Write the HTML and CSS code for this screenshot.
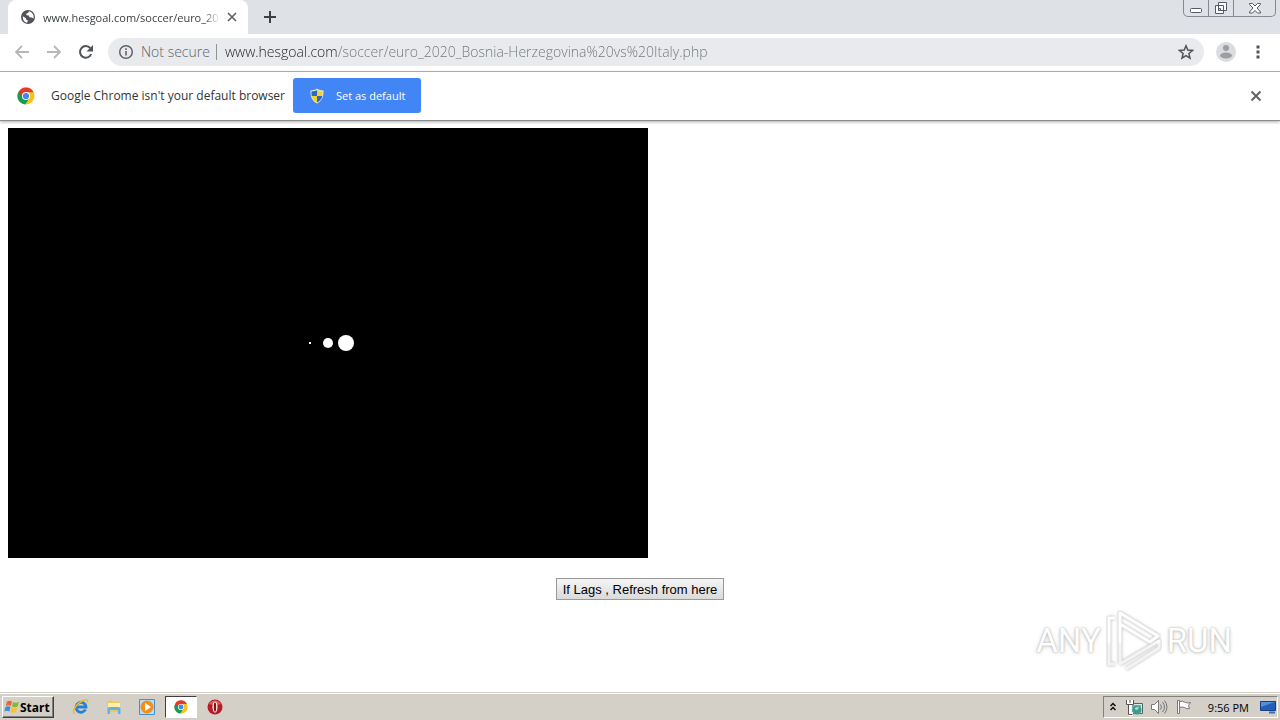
FILE: index.html
```html
<!DOCTYPE html>
<html lang="en">
<head>
<meta charset="utf-8">
<title>www.hesgoal.com/soccer/euro_2020</title>
<link rel="stylesheet" href="styles.css">
</head>
<body>
<header class="tabstrip">
  <div class="tab">
    <svg class="globe" viewBox="0 0 16 16" width="16" height="16"><circle cx="8" cy="8" r="7" fill="#505357"/><path d="M2.8 7.2 6 9.2v1.4l1.8.6-.6 2.6C4.300 13.300 2.600 11 2.800 7.200zM9 2.300l-.8 1.500-2 .9.300 1.500 2.300.2.700 1.800 2.200.2 1.800 1.100c.8-3-1-6.300-4.500-7.200z" fill="#fff"/></svg>
    <span class="tab-title">www.hesgoal.com/soccer/euro_202</span>
    <button class="icon-btn" aria-label="Close tab"><svg viewBox="0 0 12 12" width="12" height="12"><path d="M2 2l8 8M10 2l-8 8" stroke="#5f6368" stroke-width="1.700"/></svg></button>
  </div>
  <button class="icon-btn new-tab" aria-label="New tab"><svg viewBox="0 0 14 14" width="14" height="14"><path d="M7 1v12M1 7h12" stroke="#3c4043" stroke-width="2"/></svg></button>
  <div class="window-controls">
    <button class="win" aria-label="Minimize"><svg viewBox="0 0 14 14" width="14" height="14"><rect x="1.500" y="7.500" width="11" height="4" rx="1" fill="#fff" stroke="#555a66"/></svg></button>
    <button class="win" aria-label="Restore"><svg viewBox="0 0 14 14" width="14" height="14"><path d="M4.500 1.500h8v8h-8zM1.500 4.500h8v8h-8z" fill="#fff" stroke="#555a66"/><path d="M4.500 7.500h2v2h-2z" fill="#dee1e6" stroke="#555a66"/></svg></button>
    <button class="win win-close" aria-label="Close"><svg viewBox="0 0 14 14" width="14" height="14"><path d="M1.500 2.500h3L7 5l2.500-2.500h3v1L9 7l3.500 4v1h-3L7 9.500 4.500 12h-3v-1L5 7 1.500 3.500z" fill="#fff" stroke="#555a66"/></svg></button>
  </div>
</header>
<nav class="toolbar">
  <button class="icon-btn nav-btn" aria-label="Back"><svg viewBox="0 0 16 16" width="16" height="16"><path d="M15 8H2.500M8 2 2 8l6 6" fill="none" stroke="#b5b8bb" stroke-width="1.800"/></svg></button>
  <button class="icon-btn nav-btn" aria-label="Forward"><svg viewBox="0 0 16 16" width="16" height="16"><path d="M1 8h12.500M8 2l6 6-6 6" fill="none" stroke="#b5b8bb" stroke-width="1.800"/></svg></button>
  <button class="icon-btn nav-btn" aria-label="Reload"><svg viewBox="0 0 16 16" width="16" height="16"><path d="M13.200 10A5.800 5.800 0 1 1 12.300 4.200" fill="none" stroke="#505357" stroke-width="2"/><path d="M15 1v6.500H8.500z" fill="#505357"/></svg></button>
  <div class="omnibox">
    <button class="security"><svg viewBox="0 0 16 16" width="16" height="16"><circle cx="8" cy="8" r="6.300" fill="none" stroke="#5f6368" stroke-width="1.500"/><path d="M8 7v4.500M8 4.200v1.700" stroke="#5f6368" stroke-width="1.600"/></svg><span>Not secure</span></button>
    <input class="url" type="text" aria-label="Address" value="www.hesgoal.com/soccer/euro_2020_Bosnia-Herzegovina%20vs%20Italy.php">
    <button class="icon-btn" aria-label="Bookmark this page"><svg viewBox="0 0 16 16" width="16" height="16"><path d="m8 1.800 1.800 4.300 4.700.4-3.600 3 1.100 4.600L8 11.700l-4 2.400 1.100-4.600-3.600-3 4.700-.4z" fill="none" stroke="#505357" stroke-width="1.500"/></svg></button>
  </div>
  <button class="icon-btn profile" aria-label="Profile"><svg viewBox="0 0 20 20" width="20" height="20"><circle cx="10" cy="10" r="10" fill="#dadce0"/><circle cx="10" cy="6" r="3" fill="#9b9ea2"/><ellipse cx="10" cy="13.500" rx="6" ry="3" fill="#9b9ea2"/></svg></button>
  <button class="icon-btn menu" aria-label="Menu"><svg viewBox="0 0 4 14" width="4" height="14"><path d="M.5.500h3v3h-3zM.5 5.500h3v3h-3zM.5 10.500h3v3h-3z" fill="#505357"/></svg></button>
</nav>
<section class="infobar">
  <svg class="chrome" viewBox="0 0 18 18" width="18" height="18"><use href="#chrome-logo"/></svg>
  <span class="info-text">Google Chrome isn't your default browser</span>
  <button class="set-default"><svg viewBox="0 0 16 16" width="16" height="16"><path d="M8 .5C6 2 4 2.400 1.500 2.500 1.200 8.500 3 13 8 15.500 13 13 14.800 8.500 14.500 2.500 12 2.400 10 2 8 .5z" fill="#e8e6d2"/><path d="M8 2v6H2.700C2.400 6.500 2.400 5 2.500 3.500 4.500 3.400 6.500 3 8 2zM8 8h5.300C12.700 11 11 13 8 14.400z" fill="#2769c5"/><path d="M8 2v6h5.300c.3-1.500.3-3 .2-4.500C11.500 3.400 9.500 3 8 2zM8 8H2.700C3.300 11 5 13 8 14.400z" fill="#f8d22a"/></svg><span>Set as default</span></button>
  <button class="icon-btn info-close" aria-label="Dismiss"><svg viewBox="0 0 12 12" width="12" height="12"><path d="M1.500 1.500l9 9M10.500 1.500l-9 9" stroke="#5f6368" stroke-width="2"/></svg></button>
</section>
<main class="page">
  <div class="player"><span class="dot dot-small"></span><span class="dot dot-mid"></span><span class="dot dot-large"></span></div>
  <button class="refresh">If Lags , Refresh from here</button>
  <div class="watermark">
    <span>ANY</span>
    <svg viewBox="0 0 56 62" width="56" height="62"><defs><linearGradient id="mark-fill" gradientUnits="userSpaceOnUse" x1="0" y1="0" x2="0" y2="62"><stop offset=".5" stop-color="#fff"/><stop offset=".56" stop-color="#f3f3f3"/></linearGradient></defs><g fill="none" stroke-linejoin="round"><g class="mark-shade" stroke="#d2d2d2" stroke-width="5"><path d="M9 8H3v46h6M14 40V3l38 23-8 6-30-18M14 12v42M20 59l33-21v-7L14 54"/></g><g stroke="url(#mark-fill)" stroke-width="3"><path d="M9 8H3v46h6M14 40V3l38 23-8 6-30-18M14 12v42M20 59l33-21v-7L14 54"/></g></g></svg>
    <span>RUN</span>
  </div>
</main>
<footer class="taskbar">
  <button class="start"><svg viewBox="0 0 16 16" width="16" height="16"><path d="M3 2.500q2.500-1.500 5 0L6.800 7q-2.500-1.500-5 0z" fill="#f0642b"/><path d="M9 3q2.500 1.500 6 0l-1.300 4.500q-3 1.500-5.700 0z" fill="#80b93c"/><path d="M1.500 8q2.500-1.500 5 0l-1.200 4.500q-2.500-1.500-5 0z" fill="#3c8bdd"/><path d="M7.600 8.500q2.500 1.500 5.700 0L12 13q-3 1.500-5.700 0z" fill="#fac32c"/></svg><span>Start</span></button>
  <div class="launch">
    <button class="task" aria-label="Internet Explorer"><svg viewBox="0 0 18 18" width="18" height="18"><path d="M13.500 11.500A5 5 0 1 1 14 9H5" fill="none" stroke="#2683d0" stroke-width="2.800"/><path d="M2.500 15.500C-1 14 5 5 11 2.500c4-1.700 5.500-.8 4.500 2" fill="none" stroke="#f0b92c" stroke-width="1.500"/></svg></button>
    <button class="task" aria-label="Windows Explorer"><svg viewBox="0 0 18 18" width="18" height="18"><path d="M2 3.500 7 2l1 2h7v10H2z" fill="#eac95c"/><path d="M3 5h12v7H3z" fill="#fff0a5"/><path d="M2.500 16v-5q0-2 2-2h9q2 0 2 2v5H13v-4H5v4z" fill="#64b3df"/></svg></button>
    <button class="task" aria-label="Media Player"><svg viewBox="0 0 18 18" width="18" height="18"><path d="M1.500 1.500h15v15h-15z" fill="#b9dcf6" stroke="#4292d2"/><circle cx="9" cy="9" r="6.500" fill="#f28e1c"/><path d="M7 5v8l6-4z" fill="#fff"/></svg></button>
    <button class="task active" aria-label="Google Chrome"><svg viewBox="0 0 18 18" width="14" height="14"><g id="chrome-logo"><circle cx="9" cy="9" r="8.500" fill="#fbc116"/><path d="M9 9 1.600 4.700A8.500 8.500 0 0 0 8.200 17.500L12.500 11z" fill="#169b55"/><path d="M1.600 4.700A8.500 8.500 0 0 1 16.600 5.200H9L5.600 11z" fill="#e23a2e"/><circle cx="9" cy="9" r="4" fill="#fff"/><circle cx="9" cy="9" r="3.100" fill="#4285f4"/></g></svg></button>
    <button class="task" aria-label="Opera"><svg viewBox="0 0 18 18" width="18" height="18"><circle cx="9" cy="9" r="7.500" fill="#b71c24"/><path d="M3 6a7 7 0 0 1 12 0Q9 8 3 6z" fill="#db5a5e"/><ellipse cx="9" cy="9" rx="2.500" ry="5.500" fill="#fff"/><ellipse cx="9" cy="9" rx="1.200" ry="4.800" fill="#8b1118"/></svg></button>
  </div>
  <div class="tray">
    <button class="icon-btn chevrons" aria-label="Show hidden icons"><svg viewBox="0 0 8 10" width="8" height="10"><path d="M1.500 4l2.500-2.500L6.500 4M1.500 8l2.500-2.500L6.500 8" fill="none" stroke="#111" stroke-width="1.500"/></svg></button>
    <svg viewBox="0 0 17 17" width="17" height="17"><path d="M4.500 4.500h12v10h-12z" fill="#d5ecdf" stroke="#4c6b67"/><path d="M6 6h9v7H6z" fill="#79aeb0"/><circle cx="11" cy="11" r="4.500" fill="#3e9a8e"/><path d="M8.500 9.500q2-2.500 4.500-1.500l-1 2.500-2 .5z" fill="#a5dfc0"/><path d="M2 1v3h4V1M4 4v11.500h3" fill="none" stroke="#fff" stroke-width="3"/><path d="M.5 1v4.500h7V1M4 1v3M2.500 5.500v10h4" fill="none" stroke="#555"/></svg>
    <svg viewBox="0 0 18 16" width="18" height="16"><path d="M1.500 5.500h3l4-4v13l-4-4h-3z" fill="#fff" stroke="#777"/><path d="M10.500 5.500q2 2.500 0 5M12.500 3q4 5 0 10M14.500 1.500q5 6.500 0 13" fill="none" stroke="#777"/></svg>
    <svg viewBox="0 0 18 16" width="18" height="16"><path d="M2.500 1.500h2v13h-2zM4.500 2.500q3-1 6 1 2 1 5 0l-2 3 1 3q-3 1-5-1-2-1-5 0z" fill="#fff" stroke="#777"/></svg>
    <time class="clock">9:56 PM</time>
    <svg viewBox="0 0 16 14" width="16" height="14"><path d="M.5 1.500h15v9H.5z" fill="#245fb5" stroke="#193e83"/><path d="M1 2h14L1 7z" fill="#4d91df"/><path d="M9 12.500h6" stroke="#3570c4" stroke-width="2"/></svg>
  </div>
</footer>
</body>
</html>
```
FILE: styles.css
```css
* { box-sizing: border-box; }
body { margin: 0; min-height: 100vh; display: flex; flex-direction: column; background: #fff; font-family: "Open Sans", "Noto Sans", sans-serif; }
button { font: inherit; color: inherit; margin: 0; padding: 0; border: 0; background: none; }
svg { display: block; flex: none; }
.icon-btn { display: flex; align-items: center; justify-content: center; flex: none; }

.tabstrip { display: flex; height: 34px; padding-left: 8px; background: #dee1e6; }
.tab { display: flex; align-items: center; width: 240px; padding: 0 10px 0 12px; background: #fff; border-radius: 8px 8px 0 0; }
.tab-title { flex: 1; margin-left: 7px; white-space: nowrap; font-size: 11px; color: #3c4043; -webkit-mask-image: linear-gradient(to left, transparent 6px, #000 22px); mask-image: linear-gradient(to left, transparent 6px, #000 22px); }
.new-tab { margin-left: 15px; }
.window-controls { display: flex; height: 17px; margin: 0 4px 0 auto; border: 1px solid #858993; border-top: 0; border-radius: 0 0 5px 5px; }
.win { display: flex; align-items: center; justify-content: center; width: 25px; border-right: 1px solid #858993; }
.win-close { width: 41px; border-right: 0; }

.toolbar { display: flex; align-items: center; height: 38px; padding: 0 20px 2px 14px; border-bottom: 1px solid #a9abae; }
.nav-btn { width: 16px; margin-right: 16px; }
.omnibox { flex: 1; display: flex; align-items: center; height: 28px; margin-left: -2px; padding: 0 10px; border-radius: 14px; background: #e8eaed; font-size: 14px; font-weight: 300; }
.security { display: flex; align-items: center; gap: 7px; padding-right: 6px; border-right: 1px solid #8f9296; line-height: 16px; color: #5f6368; }
.url { flex: 1; min-width: 0; padding: 0 8px; border: 0; outline: 0; font: inherit; color: transparent; background: linear-gradient(to right, #202124 120px, #6f7479 120px); -webkit-background-clip: text; background-clip: text; }
.profile { margin-left: 12px; }
.menu { margin-left: 20px; }

.infobar { display: flex; align-items: center; height: 49px; padding: 0 18px 0 17px; border-bottom: 1px solid #8c8c8c; box-shadow: 0 1px 3px #aaa; }
.info-text { margin: 0 8px 0 16px; font-size: 12px; line-height: 16px; padding-bottom: 1px; color: #333; }
.set-default { display: flex; align-items: center; gap: 11px; height: 35px; margin-bottom: 1px; padding: 0 16px; border-radius: 3px; background: #4285f4; color: #fff; font-size: 11px; }
.info-close { margin-left: auto; }

.page { flex: 1; position: relative; display: flex; flex-direction: column; align-items: center; padding: 7px 8px; }
.player { display: flex; align-items: center; justify-content: center; align-self: flex-start; width: 640px; max-width: 100%; height: 430px; padding-left: 7px; background: #000; }
.dot { border-radius: 50%; background: #fff; }
.dot-small { width: 2px; height: 2px; margin-right: 12px; border-radius: 0; }
.dot-mid { width: 10px; height: 10px; margin-right: 5px; }
.dot-large { width: 16px; height: 16px; }
.refresh { height: 22px; margin-top: 20px; padding: 0 6px; border: 1px solid #9a9a9a; background: linear-gradient(#f5f5f5, #dadada); font-family: "Liberation Sans", Arial, sans-serif; font-size: 13px; color: #000; }
.watermark { position: absolute; right: 48px; bottom: 20px; display: flex; align-items: center; gap: 5px; font-family: "Liberation Sans Narrow", Roboto, sans-serif; font-size: 33px; line-height: 62px; color: #fff; text-shadow: 0 0 2px #aaa, 0 1px 4px #ccc; }
.mark-shade { filter: blur(1px); }

.taskbar { display: flex; align-items: center; height: 28px; padding: 1px 2px 0; border-top: 1px solid #d4d0c8; box-shadow: inset 0 1px #fff; background: #d4d0c8; }
.start { display: flex; align-items: center; height: 22px; width: 52px; padding: 0 1px; border: 1px solid; border-color: #fff #404040 #404040 #fff; box-shadow: inset -1px -1px #808080; font-size: 12px; font-weight: 700; color: #000; }
.launch { display: flex; margin-left: 10px; }
.task { display: flex; align-items: center; justify-content: center; width: 33px; height: 22px; }
.task.active { width: 32px; margin: 0 1px 0 2px; border: 1px solid; border-color: #404040 #fff #fff #404040; background: #fff; }
.tray { display: flex; align-items: center; gap: 7px; height: 22px; margin-left: auto; padding: 0 1px 0 5px; border: 1px solid; border-color: #808080 #fff #fff #808080; }
.chevrons { margin-right: 2px; }
.clock { margin: 0 4px 0 8px; font-size: 11px; color: #000; }
```
